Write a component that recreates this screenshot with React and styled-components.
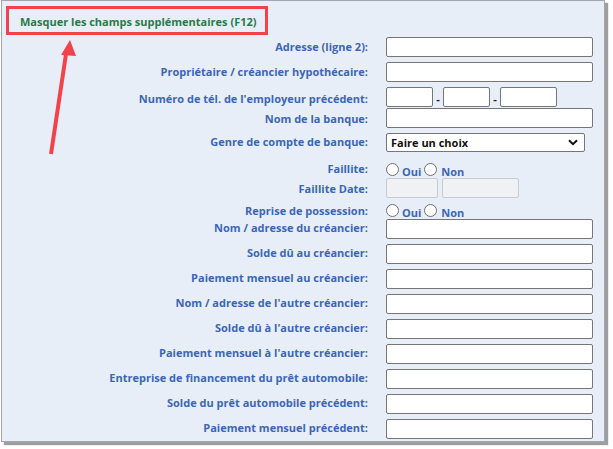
import React from 'react'
import styled, { createGlobalStyle } from 'styled-components'

const GlobalStyle = createGlobalStyle`
  html, body {
    margin: 0;
    padding: 0;
    background: #ffffff;
  }
  body {
    font-family: "Open Sans", "Liberation Sans", sans-serif;
  }
`

const Page = styled.div`
  position: relative;
  width: 613px;
  height: 449px;
  overflow: hidden;
`

const Panel = styled.div`
  margin-left: 1px;
  width: 604px;
  height: 442px;
  box-sizing: border-box;
  border: 1px solid #a3a7ad;
  background: #e8eef7;
  box-shadow: 3px 3px 1px rgba(0, 0, 0, 0.38);
`

const ToggleBox = styled.div`
  margin: 5px 0 0 4px;
  width: 262px;
  height: 29px;
  box-sizing: border-box;
  border: 3px solid #f4424a;
  display: flex;
  align-items: center;
  padding-left: 11px;
`

const ToggleLink = styled.span`
  font-size: 11px;
  font-weight: 700;
  color: #2a7b48;
  line-height: 15px;
  padding-top: 1px;
`

const Form = styled.div`
  display: flex;
  flex-direction: column;
`

const Row = styled.div`
  display: grid;
  grid-template-columns: 366px 219px;
  column-gap: 18px;
  align-items: center;
  margin-top: ${({ $mt }) => $mt}px;
  height: ${({ $h }) => $h || 20}px;
`

const Label = styled.label`
  text-align: right;
  font-size: 11px;
  font-weight: 700;
  color: #3a66b6;
  line-height: 15px;
  white-space: nowrap;
  transform: translateY(${({ $dy }) => ($dy === undefined ? -1 : $dy)}px);
`

const TextInput = styled.input`
  box-sizing: border-box;
  width: ${({ $w }) => $w || 207}px;
  height: 20px;
  margin: 0;
  padding: 0 4px;
  border: 1px solid ${({ disabled }) => (disabled ? '#c9cdd3' : '#767676')};
  border-radius: 2px;
  background: ${({ disabled }) => (disabled ? '#eff1f4' : '#ffffff')};
  font: 11px "Open Sans", sans-serif;
`

const Inline = styled.div`
  display: flex;
  align-items: center;
  gap: ${({ $gap }) => $gap || 0}px;
`

const Dash = styled.span`
  width: 10px;
  text-align: center;
  font-size: 11px;
  font-weight: 700;
  color: #222;
  line-height: 12px;
  padding-top: 3px;
`

const SelectBox = styled.div`
  box-sizing: border-box;
  width: 199px;
  height: 19px;
  border: 1px solid #767676;
  border-radius: 2px;
  background: #ffffff;
  display: flex;
  align-items: center;
  justify-content: space-between;
  padding: 0 6px 0 4px;
  font-size: 11px;
  font-weight: 700;
  color: #111;
`

const RadioGroup = styled.div`
  display: flex;
  align-items: flex-end;
  height: 14px;
`

const Radio = styled.span`
  box-sizing: border-box;
  width: 13px;
  height: 13px;
  border: 1px solid #707070;
  border-radius: 50%;
  background: #ffffff;
  align-self: flex-start;
  margin-right: ${({ $mr }) => $mr}px;
`

const RadioText = styled.span`
  font-size: 11px;
  font-weight: 700;
  color: #3a66b6;
  line-height: 11px;
  margin-right: ${({ $mr }) => $mr || 0}px;
  transform: translateY(0px);
`

const Arrow = styled.svg`
  position: absolute;
  left: 0;
  top: 0;
  pointer-events: none;
`

const Chevron = () => (
  <svg width="10" height="7" viewBox="0 0 10 7">
    <path d="M1 1.2 L5 5.2 L9 1.2" fill="none" stroke="#111" strokeWidth="2" />
  </svg>
)

const YesNo = () => (
  <RadioGroup>
    <Radio $mr={3} />
    <RadioText $mr={3}>Oui</RadioText>
    <Radio $mr={4} />
    <RadioText>Non</RadioText>
  </RadioGroup>
)

const lowerFields = [
  'Nom / adresse du créancier:',
  'Solde dû au créancier:',
  'Paiement mensuel au créancier:',
  "Nom / adresse de l'autre créancier:",
  "Solde dû à l'autre créancier:",
  "Paiement mensuel à l'autre créancier:",
  'Entreprise de financement du prêt automobile:',
  'Solde du prêt automobile précédent:',
  'Paiement mensuel précédent:',
]

const App = () => (
  <Page>
    <GlobalStyle />
    <Panel>
      <ToggleBox>
        <ToggleLink>Masquer les champs supplémentaires (F12)</ToggleLink>
      </ToggleBox>
      <Form>
        <Row $mt={2}>
          <Label>Adresse (ligne 2):</Label>
          <TextInput />
        </Row>
        <Row $mt={5}>
          <Label>Propriétaire / créancier hypothécaire:</Label>
          <TextInput />
        </Row>
        <Row $mt={5}>
          <Label $dy={1}>Numéro de tél. de l'employeur précédent:</Label>
          <Inline>
            <TextInput $w={47} />
            <Dash>-</Dash>
            <TextInput $w={47} />
            <Dash>-</Dash>
            <TextInput $w={57} />
          </Inline>
        </Row>
        <Row $mt={1}>
          <Label $dy={0}>Nom de la banque:</Label>
          <TextInput />
        </Row>
        <Row $mt={5} $h={19}>
          <Label>Genre de compte de banque:</Label>
          <SelectBox>
            <span>Faire un choix</span>
            <Chevron />
          </SelectBox>
        </Row>
        <Row $mt={10} $h={14}>
          <Label>Faillite:</Label>
          <YesNo />
        </Row>
        <Row $mt={2}>
          <Label $dy={0}>Faillite Date:</Label>
          <Inline $gap={4}>
            <TextInput $w={52} disabled />
            <TextInput $w={77} disabled />
          </Inline>
        </Row>
        <Row $mt={5} $h={14}>
          <Label $dy={0}>Reprise de possession:</Label>
          <YesNo />
        </Row>
        {lowerFields.map((label, i) => (
          <Row key={label} $mt={i === 0 ? 2 : 5}>
            <Label $dy={-2}>{label}</Label>
            <TextInput />
          </Row>
        ))}
      </Form>
    </Panel>
    <Arrow width="613" height="449" viewBox="0 0 613 449">
      <line x1="51" y1="154" x2="66" y2="54" stroke="#f4424a" strokeWidth="4" />
      <polygon points="70,40 76,56 61,55" fill="#f4424a" />
    </Arrow>
  </Page>
)

export default App
